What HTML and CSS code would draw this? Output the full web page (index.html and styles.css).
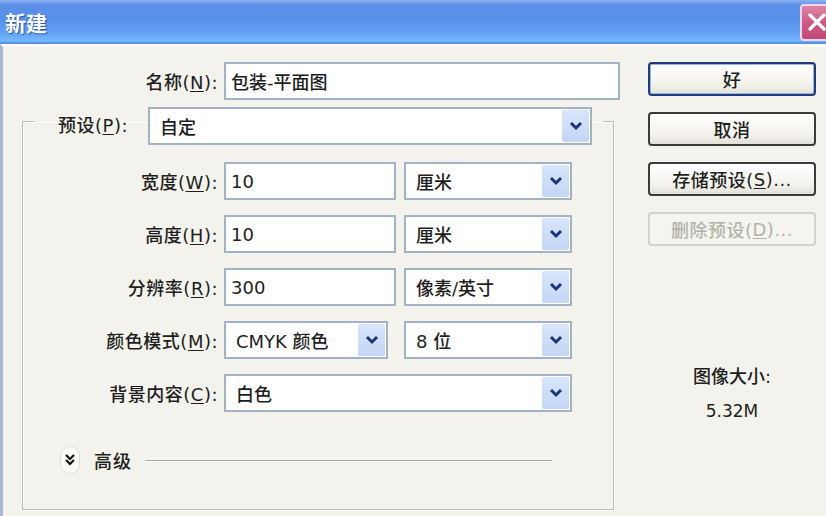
FILE: index.html
```html
<!DOCTYPE html>
<html lang="zh-CN">
<head>
<meta charset="utf-8">
<title>新建</title>
<link rel="stylesheet" href="styles.css">
</head>
<body>
<div class="window">
  <div class="titlebar">
    <span class="title">新建</span>
    <span class="close">
      <svg width="20" height="20" viewBox="0 0 20 20"><path d="M3 3 L17 17 M17 3 L3 17" stroke="#fff" stroke-width="3.2" stroke-linecap="round"/></svg>
    </span>
  </div>
  <div class="body">
    <div class="main">
      <div class="name-row">
        <span class="lbl">名称(<u>N</u>):</span>
        <div class="field input name-input">包装-平面图</div>
      </div>
      <fieldset class="group">
        <legend class="preset">
          <span class="preset-lbl">预设(<u>P</u>):</span>
          <div class="field select preset-select"><span class="val">自定</span><span class="arrow"><svg width="14" height="10" viewBox="0 0 14 10"><path d="M2 2 L7 7 L12 2" fill="none" stroke="#1b3479" stroke-width="3"/></svg></span></div>
        </legend>
        <div class="rows">
          <div class="row">
            <span class="lbl">宽度(<u>W</u>):</span>
            <div class="fields two">
              <div class="field input">10</div>
              <div class="field select"><span class="val">厘米</span><span class="arrow"><svg width="14" height="10" viewBox="0 0 14 10"><path d="M2 2 L7 7 L12 2" fill="none" stroke="#1b3479" stroke-width="3"/></svg></span></div>
            </div>
          </div>
          <div class="row">
            <span class="lbl">高度(<u>H</u>):</span>
            <div class="fields two">
              <div class="field input">10</div>
              <div class="field select"><span class="val">厘米</span><span class="arrow"><svg width="14" height="10" viewBox="0 0 14 10"><path d="M2 2 L7 7 L12 2" fill="none" stroke="#1b3479" stroke-width="3"/></svg></span></div>
            </div>
          </div>
          <div class="row">
            <span class="lbl">分辨率(<u>R</u>):</span>
            <div class="fields two">
              <div class="field input">300</div>
              <div class="field select"><span class="val">像素/英寸</span><span class="arrow"><svg width="14" height="10" viewBox="0 0 14 10"><path d="M2 2 L7 7 L12 2" fill="none" stroke="#1b3479" stroke-width="3"/></svg></span></div>
            </div>
          </div>
          <div class="row">
            <span class="lbl">颜色模式(<u>M</u>):</span>
            <div class="fields mode">
              <div class="field select"><span class="val">CMYK 颜色</span><span class="arrow"><svg width="14" height="10" viewBox="0 0 14 10"><path d="M2 2 L7 7 L12 2" fill="none" stroke="#1b3479" stroke-width="3"/></svg></span></div>
              <div class="field select"><span class="val">8 位</span><span class="arrow"><svg width="14" height="10" viewBox="0 0 14 10"><path d="M2 2 L7 7 L12 2" fill="none" stroke="#1b3479" stroke-width="3"/></svg></span></div>
            </div>
          </div>
          <div class="row">
            <span class="lbl">背景内容(<u>C</u>):</span>
            <div class="fields one">
              <div class="field select"><span class="val">白色</span><span class="arrow"><svg width="14" height="10" viewBox="0 0 14 10"><path d="M2 2 L7 7 L12 2" fill="none" stroke="#1b3479" stroke-width="3"/></svg></span></div>
            </div>
          </div>
        </div>
        <div class="advanced">
          <span class="adv-btn"><svg width="12" height="14" viewBox="0 0 12 14"><path d="M2 2 L6 6 L10 2 M2 7 L6 11 L10 7" fill="none" stroke="#111" stroke-width="2.2"/></svg></span>
          <span class="adv-lbl">高级</span>
          <span class="adv-line"></span>
        </div>
      </fieldset>
    </div>
    <div class="side">
      <div class="btn default">好</div>
      <div class="btn">取消</div>
      <div class="btn">存储预设(<u>S</u>)...</div>
      <div class="btn disabled">删除预设(<u>D</u>)...</div>
      <div class="info">
        <div class="info-lbl">图像大小:</div>
        <div class="info-val">5.32M</div>
      </div>
    </div>
  </div>
</div>
</body>
</html>
```
FILE: styles.css
```css
html, body {
  margin: 0;
  padding: 0;
}
body {
  width: 826px;
  height: 516px;
  overflow: hidden;
  font-family: "DejaVu Sans", "Noto Sans CJK SC", sans-serif;
  font-size: 18px;
  font-weight: 500;
  color: #1e1e1e;
  background: #f3f2ec;
}
u {
  text-decoration: underline;
  text-underline-offset: 2px;
}
.window {
  width: 826px;
  height: 516px;
  display: flex;
  flex-direction: column;
  overflow: hidden;
}
.titlebar {
  height: 44px;
  flex: none;
  display: flex;
  align-items: center;
  justify-content: space-between;
  background: linear-gradient(to bottom, #8db3f0 0, #5b8fe8 12%, #5890ea 45%, #63a2f4 75%, #74b7fb 92%, #4f85dc 100%);
}
.title {
  font-family: "Noto Sans CJK SC", sans-serif;
  font-weight: 700;
  font-size: 21px;
  color: #fff;
  padding-left: 5px;
  text-shadow: 1px 1px 1px #2a55a8;
}
.close {
  width: 34px;
  height: 37px;
  margin-right: -8px;
  box-sizing: border-box;
  border: 2px solid #f1d6ea;
  border-radius: 4px;
  background: linear-gradient(to bottom, #de86a6, #cc5a84 50%, #c04a77);
  display: flex;
  align-items: center;
  justify-content: center;
}
.body {
  flex: 1;
  display: flex;
  border-top: 3px solid #fbfaf6;
  border-left: 3px solid #a9b7d3;
  background: #f3f2ec;
}
.main {
  width: 598px;
  padding-left: 19px;
  padding-top: 15px;
}
.name-row {
  display: flex;
  align-items: center;
  gap: 6px;
  height: 38px;
}
.lbl {
  width: 196px;
  text-align: right;
  white-space: nowrap;
  letter-spacing: 0.5px;
}
.field {
  box-sizing: border-box;
  height: 38px;
  background: #fff;
  border: 2px solid #a3b2c6;
  display: flex;
  align-items: center;
  white-space: nowrap;
}
.input {
  padding-left: 5px;
}
.name-input {
  width: 396px;
}
.select {
  padding-left: 10px;
  padding-right: 1px;
}
.select .val {
  flex: 1;
}
.arrow {
  width: 27px;
  height: 32px;
  border-radius: 2px;
  background: linear-gradient(to bottom, #d8e5fb, #c3d6f6);
  display: flex;
  align-items: center;
  justify-content: center;
}
.group {
  margin: 7px 0 0 0;
  width: 592px;
  box-sizing: border-box;
  height: 403px;
  padding: 27px 0 0 0;
  border: 1px solid #bebcb3;
  box-shadow: 1px 1px 0 #fff, inset 1px 1px 0 #fff;
  min-inline-size: 0;
}
.preset {
  margin-left: 11px;
  padding: 0 11px 0 24px;
  height: 28px;
  display: flex;
  align-items: flex-start;
}
.preset-lbl {
  width: 90px;
  white-space: nowrap;
  letter-spacing: 0.5px;
  line-height: 38px;
}
.preset-select {
  width: 444px;
  flex: none;
}
.rows {
  display: flex;
  flex-direction: column;
  gap: 15px;
}
.row {
  display: flex;
  align-items: center;
  gap: 6px;
  height: 38px;
}
.row .lbl {
  width: 195px;
}
.fields {
  display: grid;
  gap: 8px;
}
.fields.two {
  grid-template-columns: 172px 168px;
}
.fields.mode {
  grid-template-columns: 164px 168px;
  gap: 16px;
}
.fields.one {
  grid-template-columns: 348px;
}
.advanced {
  display: flex;
  align-items: center;
  margin-top: 34px;
  padding-left: 37px;
  height: 28px;
}
.adv-btn {
  width: 20px;
  height: 28px;
  box-sizing: border-box;
  border-radius: 10px;
  background: #fbfbf8;
  border: 1px solid #e0ded6;
  display: flex;
  align-items: center;
  justify-content: center;
}
.adv-lbl {
  font-family: "Noto Sans CJK SC", sans-serif;
  margin-left: 14px;
  letter-spacing: 1px;
}
.adv-line {
  margin-left: 13px;
  width: 407px;
  height: 1px;
  background: #a9a8a2;
  box-shadow: 0 1px 0 #fff;
}
.side {
  width: 168px;
  margin-left: 28px;
  padding-top: 15px;
  display: flex;
  flex-direction: column;
  gap: 16px;
}
.btn {
  box-sizing: border-box;
  height: 34px;
  border: 2px solid #3b3b3b;
  border-radius: 4px;
  background: linear-gradient(to bottom, #ffffff, #f2f1eb 70%, #e2e0d8);
  display: flex;
  align-items: center;
  justify-content: center;
  white-space: nowrap;
  letter-spacing: 0.5px;
}
.btn.default {
  border-color: #1f3b78;
  box-shadow: inset 0 0 0 1px #9fb8e8;
}
.btn.disabled {
  border-color: #d3d1c8;
  color: #b3b2aa;
  background: #f5f4ef;
}
.info {
  margin-top: 100px;
  display: flex;
  flex-direction: column;
  align-items: center;
  gap: 13px;
}
.info-val {
  font-size: 17px;
}
```
